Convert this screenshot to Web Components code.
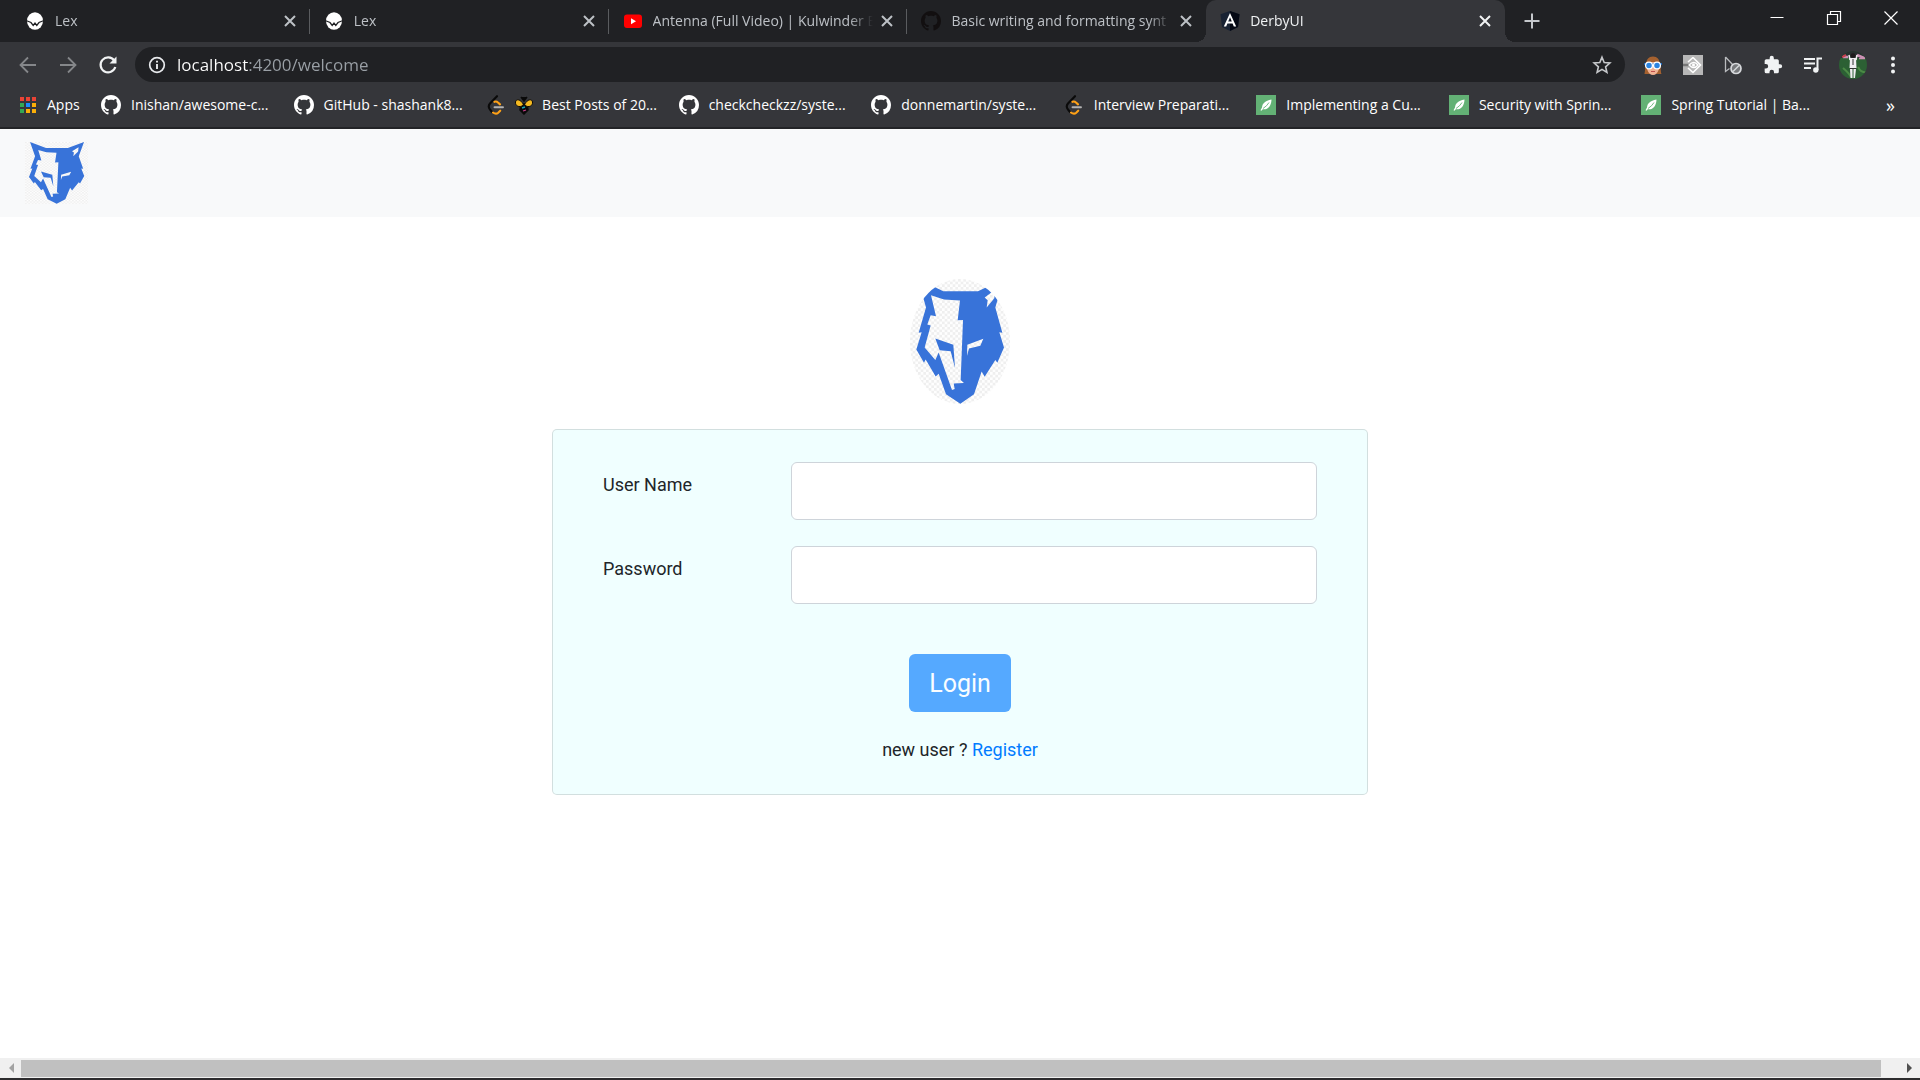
<!DOCTYPE html>
<html lang="en">
<head>
<meta charset="utf-8">
<title>DerbyUI</title>
<style>
  body { margin: 0; min-height: 100vh; display: flex; flex-direction: column; background: #fff; font-family: "Open Sans", "Noto Sans", sans-serif; }
  site-main { flex: 1; }
</style>
</head>
<body>
<tab-strip>
  <browser-tab icon="lex">Lex</browser-tab>
  <browser-tab icon="lex">Lex</browser-tab>
  <browser-tab icon="youtube">Antenna (Full Video) | Kulwinder B</browser-tab>
  <browser-tab icon="githubDark" last>Basic writing and formatting synt</browser-tab>
  <browser-tab icon="angular" active>DerbyUI</browser-tab>
</tab-strip>
<nav-toolbar></nav-toolbar>
<bookmarks-bar>
  <bookmark-link slot="apps" icon="apps">Apps</bookmark-link>
  <bookmark-link icon="github">Inishan/awesome-c...</bookmark-link>
  <bookmark-link icon="github">GitHub - shashank8...</bookmark-link>
  <bookmark-link icon="leet" extra="bee">Best Posts of 20...</bookmark-link>
  <bookmark-link icon="github">checkcheckzz/syste...</bookmark-link>
  <bookmark-link icon="github">donnemartin/syste...</bookmark-link>
  <bookmark-link icon="leet">Interview Preparati...</bookmark-link>
  <bookmark-link icon="spring">Implementing a Cu...</bookmark-link>
  <bookmark-link icon="spring">Security with Sprin...</bookmark-link>
  <bookmark-link icon="spring">Spring Tutorial | Ba...</bookmark-link>
</bookmarks-bar>
<site-header></site-header>
<site-main>
  <login-card>
    <form-field name="username" label="User Name"></form-field>
    <form-field name="password" label="Password" type="password"></form-field>
  </login-card>
</site-main>
<page-scrollbar></page-scrollbar>

<script>
const GITHUB = 'M8 0C3.58 0 0 3.58 0 8c0 3.54 2.29 6.53 5.47 7.59.4.07.55-.17.55-.38 0-.19-.01-.82-.01-1.49-2.01.37-2.53-.49-2.69-.94-.09-.23-.48-.94-.82-1.13-.28-.15-.68-.52-.01-.53.63-.01 1.08.58 1.23.82.72 1.21 1.87.87 2.33.66.07-.52.28-.87.51-1.07-1.78-.2-3.64-.89-3.64-3.95 0-.87.31-1.59.82-2.15-.08-.2-.36-1.02.08-2.12 0 0 .67-.21 2.2.82.64-.18 1.32-.27 2-.27s1.36.09 2 .27c1.53-1.04 2.2-.82 2.2-.82.44 1.1.16 1.92.08 2.12.51.56.82 1.27.82 2.15 0 3.07-1.87 3.75-3.65 3.95.29.25.54.73.54 1.48 0 1.07-.01 1.93-.01 2.2 0 .21.15.46.55.38A8.01 8.01 0 0 0 16 8c0-4.42-3.58-8-8-8z';

/* name: [viewBox, markup] */
const ICONS = {
  lex: ['0 0 20 20', '<ellipse cx="10" cy="10" rx="8" ry="8.800" fill="#fff"/><path d="M1 9.500l5 2 2.200 3L10 12l1.800 2.500 2.200-3 5-2" fill="none" stroke="#202124" stroke-width="1.300"/>'],
  youtube: ['0 0 20 20', '<rect x="1" y="3.500" width="18" height="13.500" rx="3" fill="#f00"/><path d="M8 7.200v6l5-3z" fill="#fff"/>'],
  github: ['0 0 16 16', `<path d="${GITHUB}" fill="#fff"/>`],
  githubDark: ['0 0 16 16', `<path d="${GITHUB}" fill="#120f10"/>`],
  angular: ['0 0 20 20', '<path d="M10 0l9.500 3.200L18 16l-8 4-8-4L.500 3.200z" fill="#182233"/><path d="M10 0l9.500 3.200L18 16l-8 4z" fill="#050914"/><path d="M10 2L3.800 15.500h2.400l1.200-3h5.200l1.200 3h2.400zm0 4.300l1.800 4.200H8.200z" fill="#fff"/>'],
  apps: ['0 0 18 18', '<g><path d="M1 1h4v4H1zM7 1h4v4H7zM13 1h4v4h-4z" fill="#ea4335"/><path d="M1 7h4v4H1zM1 13h4v4H1z" fill="#34a853"/><path d="M7 7h4v4H7z" fill="#1a8cff"/><path d="M13 7h4v4h-4zM7 13h4v4H7zM13 13h4v4h-4z" fill="#fbaf08"/></g>'],
  leet: ['0 0 20 20', '<path d="M11 1.200L4 8.500Q1.500 11.500 4 14.500L6 17" fill="none" stroke="#0a0a0a" stroke-width="2.100" stroke-linecap="round"/><path d="M8.500 6.800q2-.8 3.500.8l2 1.800M7 17.500q3 2.200 5.200.2l2-2" fill="none" stroke="#ffa116" stroke-width="2.100" stroke-linecap="round"/><path d="M8.500 12.300h8.500" stroke="#b3b3b3" stroke-width="1.900" stroke-linecap="round"/>'],
  bee: ['0 0 20 20', '<path d="M7 2l3 4 3-4M7 9h6l1 6-4 4-4-4z" stroke="#0a0a0a" stroke-width="1.500" fill="#0a0a0a"/><path d="M9.500 10C7 4 2 3.500 1.500 7S5 13.500 9.500 10zM10.500 10C13 4 18 3.500 18.500 7S15 13.500 10.500 10z" fill="#f5b921" stroke="#0a0a0a"/><path d="M8 13l3-1" stroke="#1aa5b8" stroke-width="1.500"/><path d="M9 16l3-1" stroke="#c9408d" stroke-width="1.200"/>'],
  spring: ['0 0 20 20', '<path d="M0 0h20v20H0z" fill="#63b175"/><path d="M15.500 4.500C9 6 6.500 8 6 12.500l-1.500 2.700.9.600 1.400-1.600c5 .8 8.500-3 8.700-9.700z" fill="#fff"/><path d="M7 13.500q4-2.500 6-6" fill="none" stroke="#63b175" stroke-width=".9"/>'],
  close: ['0 0 20 20', '<path d="M5 5l10 10M15 5L5 15" stroke="currentColor" stroke-width="2"/>'],
  plus: ['0 0 20 20', '<path d="M10 2.500v15M2.500 10h15" stroke="#c4c7cb" stroke-width="2"/>'],
  minimize: ['0 0 20 20', '<path d="M3.500 9.500h13" stroke="#fff"/>'],
  restore: ['0 0 20 20', '<path d="M3.500 6.500h10v10h-10zM6.500 6.500v-3h10v10h-3" fill="none" stroke="#fff" stroke-width="1.200"/>'],
  winClose: ['0 0 20 20', '<path d="M3.500 3.500l13 13M16.500 3.500l-13 13" stroke="#fff" stroke-width="1.200"/>'],
  back: ['0 0 20 20', '<path d="M18 10H3M10 2.500L2.500 10l7.500 7.500" fill="none" stroke="#85878a" stroke-width="1.800"/>'],
  forward: ['0 0 20 20', '<path d="M2 10h15M10 2.500l7.500 7.500-7.500 7.500" fill="none" stroke="#85878a" stroke-width="1.800"/>'],
  reload: ['0 0 20 20', '<path d="M16.200 5.500A7.500 7.500 0 1 0 17.300 12" fill="none" stroke="#f1f3f4" stroke-width="2.200"/><path d="M18.500 1.500v7h-7z" fill="#f1f3f4"/>'],
  info: ['0 0 20 20', '<circle cx="10" cy="10" r="7.300" fill="none" stroke="#e8eaed" stroke-width="1.700"/><path d="M10 9v5M10 5.700v1.800" stroke="#e8eaed" stroke-width="1.900"/>'],
  star: ['0 0 20 20', '<path d="M10 2.200l2.200 5.300 5.700.5-4.300 3.800 1.300 5.600-4.900-3-4.900 3 1.300-5.600L2.100 8l5.700-.5z" fill="none" stroke="#c6c8cb" stroke-width="1.600"/>'],
  glasses: ['0 0 20 20', '<path d="M1.500 19C3 14 1 1.500 10 1.500S17 14 18.500 19z" fill="#a5612f"/><path d="M4 9q6-4 12 0v5q-2 6-6 6t-6-6z" fill="#f0b294"/><path d="M1 9h18" stroke="#1763b8" stroke-width="2"/><circle cx="6" cy="10.500" r="3.400" fill="#2b84e0" stroke="#fff" stroke-width="1.300"/><circle cx="14" cy="10.500" r="3.400" fill="#2b84e0" stroke="#fff" stroke-width="1.300"/><path d="M8 16.500h4" stroke="#c0504d"/>'],
  grayBox: ['0 0 20 20', '<path d="M0 0h20v20H0z" fill="#b7b7b7"/><path d="M10 2.500l7.500 7.500-7.500 7.500L5 13M10 2.500L5 7" fill="none" stroke="#fff" stroke-width="1.600"/><path d="M0 10h7" stroke="#777" stroke-width="2.500"/><path d="M6 10q5-5 9 0-4 5-9 0z" fill="none" stroke="#fff" stroke-width="1.300"/><circle cx="10.500" cy="10" r="1.500" fill="#fff"/>'],
  cursor: ['0 0 20 20', '<path d="M2.500 2v14.500l4-3M2.500 2l7.500 8" fill="none" stroke="#b9bbbe" stroke-width="1.300"/><circle cx="13" cy="13.500" r="5" fill="#77797c" stroke="#d7d9dc" stroke-width="1.700"/><path d="M10 16.500l6-6" stroke="#d7d9dc" stroke-width="1.500"/>'],
  puzzle: ['0 0 24 24', '<path d="M20.500 11H19V7a2 2 0 0 0-2-2h-4V3.500a2.500 2.500 0 0 0-5 0V5H4a2 2 0 0 0-2 2v3.800h1.500a2.700 2.700 0 0 1 0 5.400H2V20a2 2 0 0 0 2 2h3.800v-1.500a2.700 2.700 0 0 1 5.400 0V22H17a2 2 0 0 0 2-2v-4h1.500a2.500 2.500 0 0 0 0-5z" fill="#f1f3f4"/>'],
  playlist: ['0 0 20 20', '<path d="M1 4h11M1 8.500h11M1 13h7M14.500 15V3.500H19" fill="none" stroke="#f1f3f4" stroke-width="2"/><circle cx="12.800" cy="15" r="2.700" fill="#f1f3f4"/>'],
  avatar: ['0 0 28 28', '<defs><clipPath id="c"><circle cx="14" cy="14" r="14"/></clipPath></defs><g clip-path="url(#c)"><path d="M0 0h28v28H0z" fill="#2c6034"/><path d="M0 0h28v7H0z" fill="#28302f"/><path d="M4 6h5M18 4l7 3M20 7h6" stroke="#cb91b4" stroke-width="2.500"/><path d="M3 6l4-2" stroke="#c7414e" stroke-width="2"/><path d="M4 17q6 5 8 9M19 16q3 6 8 5" stroke="#4b8a45" stroke-width="2" fill="none"/><path d="M11 7h6l.500 10h-7zM11 18h2.500v9h-2zM14.500 18H17l-1 9h-1.500z" fill="#f0edf2"/><path d="M11 9l-1-5M17 9l1-5" stroke="#eee" stroke-width="1.500"/><circle cx="14" cy="4.500" r="2.300" fill="#1e1a1b"/><path d="M14 8v6M11 17.500h6" stroke="#333"/></g>'],
  dots: ['0 0 20 20', '<g fill="#f1f3f4"><circle cx="10" cy="3.500" r="2"/><circle cx="10" cy="10" r="2"/><circle cx="10" cy="16.500" r="2"/></g>'],
  arrowLeft: ['0 0 20 20', '<path d="M13 5v10l-5-5z" fill="#a3a3a3"/>'],
  arrowRight: ['0 0 20 20', '<path d="M7 5v10l5-5z" fill="#505050"/>']
};

function define(name, render) {
  customElements.define(name, class extends HTMLElement {
    connectedCallback() {
      if (this.shadowRoot) return;
      const t = document.createElement('template');
      t.innerHTML = render(this);
      this.attachShadow({ mode: 'open' }).append(t.content.cloneNode(true));
    }
  });
}

const BUTTON = 'button{appearance:none;border:0;background:none;padding:0;margin:0;display:flex;align-items:center;justify-content:center;color:inherit}';

define('ui-icon', el => {
  const [box, art] = ICONS[el.getAttribute('name')];
  return `<style>:host{display:block;flex:none;width:var(--size,20px);height:var(--size,20px)} svg{display:block;width:100%;height:100%}</style>
  <svg viewBox="${box}" aria-hidden="true">${art}</svg>`;
});

define('tab-strip', () => `<style>
  ${BUTTON}
  :host{display:flex;height:42px;background:#202124;padding:0 1px 0 11px;color:#bdc1c6}
  nav{display:flex;flex:0 1 1494px;min-width:0}
  .new{width:54px}
  .window{display:flex;margin-left:auto;height:36px}
  .window button{width:57px}
</style>
<nav role="tablist"><slot></slot></nav>
<button class="new" aria-label="New tab"><ui-icon name="plus"></ui-icon></button>
<div class="window">
  <button aria-label="Minimize"><ui-icon name="minimize"></ui-icon></button>
  <button aria-label="Restore"><ui-icon name="restore"></ui-icon></button>
  <button aria-label="Close"><ui-icon name="winClose"></ui-icon></button>
</div>`);

define('browser-tab', el => `<style>
  ${BUTTON}
  :host{display:flex;flex:1;min-width:0;align-items:center;gap:10px;padding:0 10px 0 14px;box-sizing:border-box;position:relative;font-size:14px;line-height:20px}
  .title{flex:1;min-width:0;white-space:nowrap;overflow:hidden;-webkit-mask-image:linear-gradient(90deg,#000 calc(100% - 24px),transparent);mask-image:linear-gradient(90deg,#000 calc(100% - 24px),transparent)}
  button{margin-left:-6px}
  :host(:not([active]):not([last]))::after{content:"";position:absolute;right:0;top:9px;width:1px;height:25px;background:#5a5c5f}
  :host([active]){background:#35363a;border-radius:10px 10px 0 0;color:#f1f3f4}
  :host([active])::before,:host([active])::after{content:"";position:absolute;bottom:0;width:10px;height:10px}
  :host([active])::before{right:100%;background:radial-gradient(circle at 0 0,transparent 10px,#35363a 10px)}
  :host([active])::after{left:100%;background:radial-gradient(circle at 100% 0,transparent 10px,#35363a 10px)}
</style>
<ui-icon name="${el.getAttribute('icon')}"></ui-icon>
<span class="title" role="tab"><slot></slot></span>
<button aria-label="Close tab"><ui-icon name="close"></ui-icon></button>`);

define('nav-toolbar', () => `<style>
  ${BUTTON}
  :host{display:flex;align-items:center;height:45px;background:#35363a;padding:0 7px 0 8px}
  .nav{width:40px;height:36px}
  .omni{flex:1;display:flex;align-items:center;gap:10px;height:35px;margin:0 8px 0 7px;padding:0 13px 0 12px;border-radius:18px;background:#202124}
  input{flex:1;min-width:0;border:0;outline:0;padding:0;margin:0;font:17px/24px "Open Sans","Noto Sans",sans-serif;color:transparent;background:linear-gradient(90deg,#fff 72px,#9aa0a6 72px);-webkit-background-clip:text;background-clip:text}
  .avatar{--size:28px}
</style>
<button class="nav" aria-label="Back"><ui-icon name="back"></ui-icon></button>
<button class="nav" aria-label="Forward"><ui-icon name="forward"></ui-icon></button>
<button class="nav" aria-label="Reload"><ui-icon name="reload"></ui-icon></button>
<div class="omni">
  <ui-icon name="info"></ui-icon>
  <input type="text" aria-label="Address" value="localhost:4200/welcome">
  <button aria-label="Bookmark"><ui-icon name="star"></ui-icon></button>
</div>
${['glasses', 'grayBox', 'cursor', 'puzzle', 'playlist', 'avatar', 'dots'].map(n =>
  `<button class="nav" aria-label="${n}"><ui-icon name="${n}" class="${n}"></ui-icon></button>`).join('')}`);

define('bookmarks-bar', () => `<style>
  ${BUTTON}
  :host{display:flex;align-items:center;height:36px;background:#35363a;border-bottom:2px solid #232427;padding:0 19px 4px;color:#fff;font-size:14px;line-height:20px}
  .apps{flex:0 0 82px}
  .list{flex:1;min-width:0;display:grid;grid-template-columns:repeat(9,minmax(0,1fr))}
  .more{width:67px;padding-left:46px;font:18px/24px "Open Sans",sans-serif}
</style>
<div class="apps"><slot name="apps"></slot></div>
<div class="list"><slot></slot></div>
<button class="more" aria-label="More bookmarks">»</button>`);

define('bookmark-link', el => {
  const extra = el.getAttribute('extra');
  return `<style>
  :host{display:block;min-width:0}
  a{display:flex;align-items:center;gap:10px;color:inherit;text-decoration:none;white-space:nowrap}
  .pair{gap:8px}
  :host([icon=apps]) ui-icon{--size:18px}
</style>
<a href="#" class="${extra ? 'pair' : ''}"><ui-icon name="${el.getAttribute('icon')}"></ui-icon>${extra ? `<ui-icon name="${extra}"></ui-icon>` : ''}<span><slot></slot></span></a>`;
});

define('wolf-logo', () => `<style>:host{display:block;overflow:hidden} svg{display:block;width:100%;height:100%}</style>
<svg viewBox="0 0 300 376" preserveAspectRatio="none" role="img" aria-label="Derby">
  <defs>
    <pattern id="check" width="16" height="16" patternUnits="userSpaceOnUse"><path d="M0 0h16v16H0z" fill="#fefefe"/><path d="M0 0h8v8H0zM8 8h8v8H8z" fill="#efefef"/></pattern>
  </defs>
  <path d="M0 0h300v376H0z" fill="url(#check)"/>
  <path fill="#3873d9" fill-rule="evenodd" d="M24 0L100 37H204L281 0L256 86L277 162L268 160L282 206L262 252L256 244L224 294L215 278L192 347L151 375L108 347L86 285L77 293L47 242L42 252L19 212L35 160L26 162L48 86Z
    M63 49L78 112L62 109L52 137L62 140L44 206L76 244L86 221L126 334L134 331L131 314L162 313L152 304L159 123L143 124L150 65L102 62Z
    M171 231L172 198L220 180L211 201L177 209Z
    M255 32L224 56L233 64L230 86L253 58Z"/>
  <path fill="#3873d9" d="M76 179L130 198L135 268L122 217L89 214Z"/>
</svg>`);

define('site-header', () => `<style>
  :host{display:flex;align-items:center;height:88px;padding:0 25px;background:#f8f9fa}
  wolf-logo{width:63px;height:62px}
</style><a href="#"><wolf-logo></wolf-logo></a>`);

define('site-main', () => `<style>
  :host{display:flex;flex-direction:column;align-items:center;gap:25px;padding:62px 24px 0;font-family:Roboto,sans-serif;color:#212529}
  wolf-logo{width:100px;height:125px;border-radius:50%}
</style><wolf-logo></wolf-logo><slot></slot>`);

define('login-card', () => `<style>
  :host{display:block;width:100%;max-width:816px;box-sizing:border-box;padding:32px 50px 31px;border:1px solid rgba(0,0,0,.125);border-radius:5px;background:#f0ffff;font-size:18px;line-height:27px}
  form{display:flex;flex-direction:column;gap:26px}
  .actions{display:flex;flex-direction:column;align-items:center;gap:24px;padding-top:24px}
  button{appearance:none;border:0;border-radius:6px;height:58px;padding:2px 20px 0;background:#55a9ff;color:#fafdff;font:25px/38px Roboto,sans-serif}
  p{margin:0}
  a{color:#007bff;text-decoration:none}
</style>
<form><slot></slot>
  <div class="actions"><button type="button">Login</button><p>new user ? <a href="#">Register</a></p></div>
</form>`);

define('form-field', el => `<style>
  :host{display:flex;align-items:flex-start}
  label{flex:0 0 188px;padding-top:9px}
  input{flex:1;min-width:0;height:58px;box-sizing:border-box;padding:10px 20px;border:1px solid #ced4da;border-radius:6px;background:#fff;font:25px/38px Roboto,sans-serif;color:#495057}
</style>
<label for="field">${el.getAttribute('label')}</label>
<input id="field" name="${el.getAttribute('name')}" type="${el.getAttribute('type') || 'text'}">`);

define('page-scrollbar', () => `<style>
  ${BUTTON}
  :host{display:flex;height:20px;background:#f0f0f0;border-bottom:2px solid #2d2c2e}
  .thumb{flex:1;margin:2px 18px 1px 0;background:#c0c0c0}
  button{width:21px}
</style>
<button aria-label="Scroll left"><ui-icon name="arrowLeft"></ui-icon></button>
<div class="thumb"></div>
<button aria-label="Scroll right"><ui-icon name="arrowRight"></ui-icon></button>`);
</script>
</body>
</html>
